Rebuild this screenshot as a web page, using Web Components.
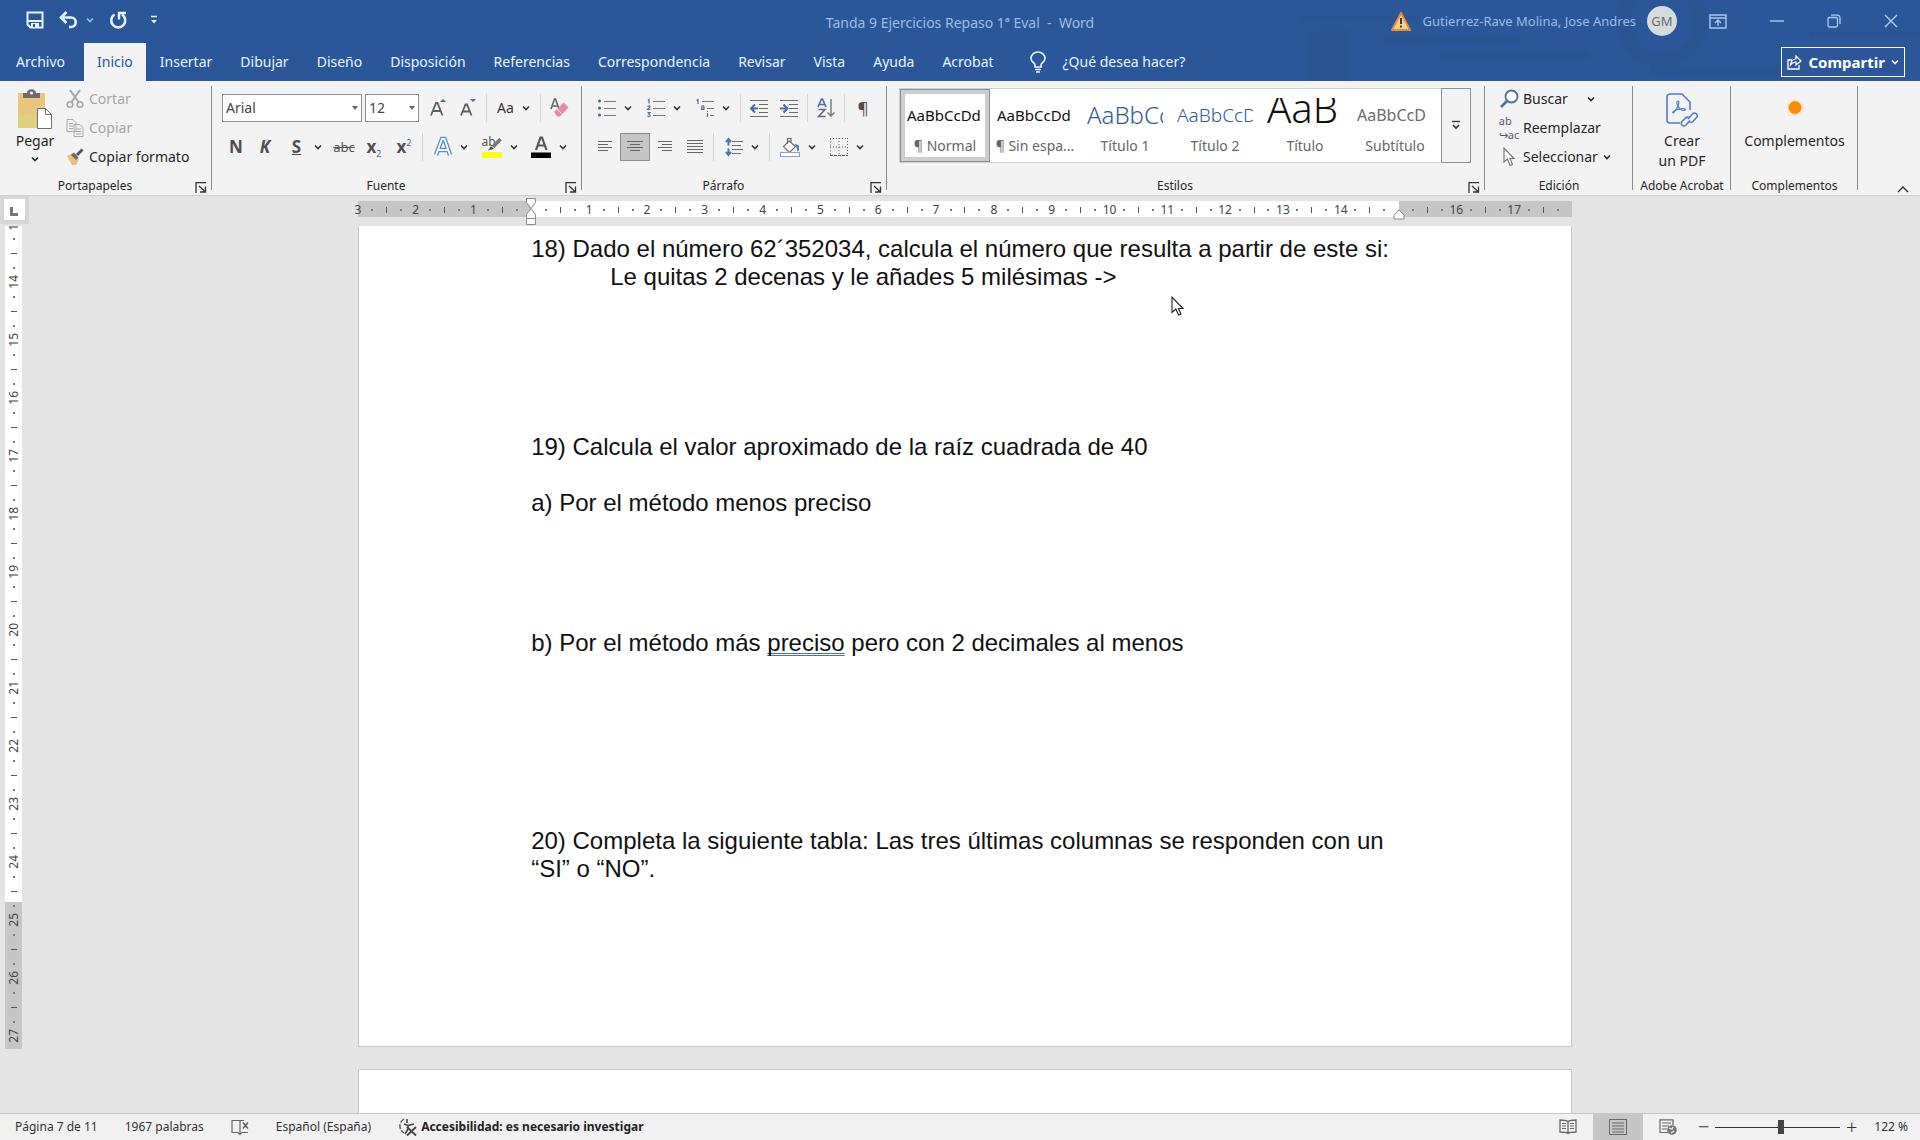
<!DOCTYPE html>
<html lang="es">
<head>
<meta charset="utf-8">
<title>Tanda 9 Ejercicios Repaso 1ª Eval - Word</title>
<style>
  html, body { margin: 0; height: 100%; overflow: hidden; }
  body { font: 14px/20px "Noto Sans", "Open Sans", sans-serif; color: #262626; background: #e4e4e4; }
</style>
</head>
<body>
<word-app></word-app>

<script>
const ICONS = {
  save: [18, 18, '<path d="M1.5 1.5h15v15h-12l-3-3z" fill="none" stroke="#e6f6ff" stroke-width="2"/><path d="M1 10h16" stroke="#e6f6ff" stroke-width="2"/><path d="M5 17v-5h8v5" fill="#e6f6ff"/><path d="M7 13h2v3H7z" fill="#2b579a"/>'],
  undo: [20, 18, '<path d="M2 6.500h10a4.500 4.500 0 0 1 0 9.500h-2" fill="none" stroke="#e6f6ff" stroke-width="2.600"/><path d="M7.500 1 2 6.500 7.500 12" fill="none" stroke="#e6f6ff" stroke-width="2.600"/>'],
  redo: [18, 18, '<path d="M5.500 3.500a7 7 0 1 0 7.500 0" fill="none" stroke="#e6f6ff" stroke-width="2.600"/><path d="M10 8.500V2h7" fill="none" stroke="#e6f6ff" stroke-width="2.400"/>'],
  customize: [8, 10, '<path d="M1 1.500h6" stroke="#e6f6ff" stroke-width="1.500"/><path d="M1 5h6L4 8.500z" fill="#e6f6ff"/>'],
  chev: [8, 8, '<path d="M1 2.500 4 5.500 7 2.500" fill="none" stroke="currentColor" stroke-width="1.600"/>'],
  bulb: [18, 22, '<path d="M6 16v-2C6 12 2 11 2 7.500a7 6.500 0 0 1 14 0C16 11 12 12 12 14v2z" fill="none" stroke="#e6f6ff" stroke-width="1.600"/><path d="M6 18.500h6M7 21h4" stroke="#e6f6ff" stroke-width="1.600"/>'],
  warning: [20, 19, '<path d="M10 1 19 18H1z" fill="#fbd58e" stroke="#e98a3c" stroke-width="2" stroke-linejoin="round"/><path d="M10 6v6M10 13.500v2" stroke="#4a3a28" stroke-width="2"/>'],
  display: [18, 15, '<path d="M1 1h16v13H1zM1 4h16M9 12V6M6 9l3-3 3 3" fill="none" stroke="#a9c8f0" stroke-width="1.400"/>'],
  min: [14, 14, '<path d="M0 7h14" stroke="#a9c8f0" stroke-width="1.400"/>'],
  restore: [14, 14, '<rect x="1" y="3.500" width="9.500" height="9.500" rx="1.500" fill="none" stroke="#a9c8f0" stroke-width="1.300"/><path d="M4 1.200h6.500a2.500 2.500 0 0 1 2.500 2.500V10" fill="none" stroke="#a9c8f0" stroke-width="1.300"/>'],
  close: [14, 14, '<path d="M1 1l12 12M13 1 1 13" stroke="#b9d4f5" stroke-width="1.300"/>'],
  share: [15, 16, '<path d="M5 6H1v9h11v-4" fill="none" stroke="#fff" stroke-width="1.300"/><path d="M3.500 11C4 7 6.500 5 9 5V2l5 5-5 4V8C7 8 5 9 3.500 11z" fill="none" stroke="#fff" stroke-width="1.200"/>'],
  paste: [34, 40, '<rect x="0" y="4" width="27" height="35" fill="#eac57d"/><path d="M0 26h20v13H0z" fill="#e0cf80"/><path d="M5 4h4c0-5 9-5 9 0h4v5H5z" fill="#6f6a70"/><circle cx="13.500" cy="4" r="1.600" fill="#f3f3f3"/><path d="M20 20.500h8l6 6V40.500H20z" fill="#fff" stroke="#6f6f6f" transform="translate(-.500 -1)"/><path d="M27.500 19.500v6h6" fill="none" stroke="#6f6f6f"/>'],
  cut: [18, 20, '<path d="M4 1l8.500 12M14 1 5.500 13" stroke="#a6a6a6" stroke-width="2"/><circle cx="4" cy="15.500" r="2.800" fill="none" stroke="#a6a6a6" stroke-width="1.600"/><circle cx="14" cy="15.500" r="2.800" fill="none" stroke="#a6a6a6" stroke-width="1.600"/>'],
  copy: [18, 20, '<path d="M1 1.500h6l3 3v9H1zM8 6.500h6l3 3v9H8z" fill="#f3f3f3" stroke="#a9a9a9"/><path d="M3 5.500h4M3 8h4M3 10.500h4M10 11h5M10 13.500h5M10 16h5" stroke="#a9a9a9"/>'],
  brush: [18, 18, '<path d="M1 8l6-3 6 6-3 6H6z" fill="#e7c278"/><path d="M8 4.500 12.500 9.500 10 12 5 7z" fill="#6f6a6a"/><path d="M11 7l5.500-5.500" stroke="#555" stroke-width="3"/>'],
  grow: [18, 20, '<path d="M2 17.500 7 5h1.500l5 12.500M4 13h7.500" fill="none" stroke="#5f5f5f" stroke-width="1.800"/><path d="M11 4l3-3 3 3z" fill="#2e6f9e"/>'],
  shrink: [18, 20, '<path d="M2 17.500 6.500 6.500H8l4.500 11M4 13.500h6.500" fill="none" stroke="#5f5f5f" stroke-width="1.800"/><path d="M11 1h6l-3 3z" fill="#3b6fc0"/>'],
  eraser: [20, 20, '<path d="M2 11 5.500 1h1L10 11M3.500 8h5" fill="none" stroke="#666" stroke-width="1.600"/><path d="M5 14 14.500 4.500 19.500 9.500 11 18.500 8 18.500z" fill="#e78aa5"/><path d="M8 11l5 5" stroke="#f6dbe3"/>'],
  effects: [18, 20, '<path d="M2 18 8 2h2.500L16 18M4.500 13h9" fill="none" stroke="#5a8fd0" stroke-width="4.500"/><path d="M2 18 8 2h2.500L16 18M4.500 13h9" fill="none" stroke="#fff" stroke-width="1.800"/>'],
  marker: [20, 22, '<path d="M18.500 3 11 11" stroke="#777" stroke-width="3.500"/><path d="M6 14.500 9 10l3 3z" fill="#555"/><path d="M0 16h20v6H0z" fill="#fdfd12"/>'],
  fontcolor: [20, 22, '<path d="M5 14 9.500 1.500h1.500L15.500 14M6.500 9.500H14" fill="none" stroke="#555" stroke-width="2.200"/><path d="M0 16.500h20V22H0z" fill="#000"/>'],
  bullets: [18, 18, '<g fill="#4a5f96"><circle cx="1.500" cy="2" r="1.500"/><circle cx="1.500" cy="9" r="1.500"/><circle cx="1.500" cy="16" r="1.500"/></g><path d="M6 2.500h12M6 9.500h12M6 16.500h12" stroke="#777"/>'],
  numbers: [18, 18, '<path d="M1 1.500 2 .500V4.500M.500 7.500Q3 6 3 8L.500 10.500H3.500M.500 13.500H3L1.500 15Q3.500 15.500 3 17 2 18 .500 17" fill="none" stroke="#5c6d9c" stroke-width="1.200"/><path d="M6 2.500h12M6 9.500h12M6 16.500h12" stroke="#777"/>'],
  multilevel: [18, 18, '<path d="M.500 1.500 2 .500V5M5 7.500Q8 6 8 8V10.500H5.500V9H8M11.500 14V18M11.500 12v1" fill="none" stroke="#5c6d9c" stroke-width="1.200"/><path d="M6 2.500h12M11 9.500h7M14 16.500h4" stroke="#777"/>'],
  outdent: [18, 18, '<path d="M0 1.500h18M9 5.500h9M9 9.500h9M9 13.500h9M0 17.500h18" stroke="#6d6d6d"/><path d="M8 9.500H2M5 5.500 1 9.500 5 13.500" fill="none" stroke="#4a6ba5" stroke-width="2"/>'],
  indent: [18, 18, '<path d="M0 1.500h18M9 5.500h9M9 9.500h9M9 13.500h9M0 17.500h18" stroke="#6d6d6d"/><path d="M0 9.500h6M3.500 5.500 7.500 9.500 3.500 13.500" fill="none" stroke="#4a6ba5" stroke-width="2"/>'],
  sort: [18, 20, '<path d="M1 9 4.500 1h1L9 9M2.500 6.500h5" fill="none" stroke="#4f6fb5" stroke-width="1.700"/><path d="M1.500 11.500h6.500L1.500 18.500H8.500" fill="none" stroke="#6d5f80" stroke-width="1.500"/><path d="M14 1v17M10.500 14.500 14 18l3.500-3.500" fill="none" stroke="#777" stroke-width="1.400"/>'],
  left: [16, 16, '<path d="M1 2.500h14M1 5.500h10M1 8.500h14M1 11.500h10" stroke="#666"/>'],
  center: [16, 16, '<path d="M0 2.500h16M3 5.500h10M0 8.500h16M3 11.500h10" stroke="#666"/>'],
  right: [16, 16, '<path d="M1 2.500h14M5 5.500h10M1 8.500h14M5 11.500h10" stroke="#666"/>'],
  justify: [16, 16, '<path d="M0 1.500h16M0 4.500h16M0 7.500h16M0 10.500h16M0 13.500h16" stroke="#666"/>'],
  spacing: [18, 18, '<path d="M7 3.500h11M7 7.500h9M7 11.500h11M7 15.500h9" stroke="#6d6d6d"/><path d="M3.500 1.500v6M3.500 10.500v6M1 4 3.500 1 6 4M1 14 3.500 17 6 14" fill="none" stroke="#4a78b5" stroke-width="2"/>'],
  bucket: [20, 20, '<path d="M9 4 15.500 9.500 9.500 15.500 3.500 9.500z" fill="#fff" stroke="#6d6d6d" stroke-width="1.200"/><path d="M7.500 7V1.500h3.500V5" fill="none" stroke="#6d6d6d" stroke-width="1.200"/><path d="M14 6.500l5 2V13l-1.500 1.500L16.500 10z" fill="#4a7fb5"/><rect x=".500" y="15.500" width="19" height="4" fill="#fff" stroke="#8aa0c0"/>'],
  borders: [18, 18, '<path d="M.500 .500v17M9 0v17.500M17.500 0v17.500M0 .500h18M0 9h18" fill="none" stroke="#666" stroke-dasharray="1 2"/><path d="M0 17.500h18" stroke="#666" stroke-dasharray="3 1"/>'],
  more: [12, 10, '<path d="M2 1.500h8" stroke="#333" stroke-width="1.400"/><path d="M3 5l3 3 3-3" fill="none" stroke="#333" stroke-width="1.600"/>'],
  launcher: [12, 11, '<path d="M1 11V.700h10" fill="none" stroke="#333" stroke-width="1.300"/><path d="M4 4l6 5.500M10.500 4.500V10H5" fill="none" stroke="#333" stroke-width="1.300"/>'],
  find: [19, 19, '<circle cx="11.500" cy="7.500" r="6" fill="#fff" stroke="#4a7199" stroke-width="1.800"/><path d="M7 12 1 18" stroke="#4a7199" stroke-width="2.600"/>'],
  arrow: [12, 20, '<path d="M1 1v14l3.500-3 2.500 6.500 2.500-1L7 11.500h4z" fill="#fff" stroke="#6f6f6f" stroke-width="1.100"/>'],
  pdf: [32, 36, '<path d="M14 30H4a3 3 0 0 1-3-3V4a3 3 0 0 1 3-3h12l8 8v8" fill="none" stroke="#4f7bd0" stroke-width="1.600"/><path d="M12 8c-1.500 0-1.500 2 0 5 1.500 3 4 4.500 6 4.500s2-1.500 0-1.800c-3-.400-7 .700-10 2.300-2 1.200-1.500 2.500-.300 1.500C10 17.500 13 12 13 9c0-.700-.500-1-1-1z" fill="none" stroke="#4f7bd0" stroke-width="1.200"/><path d="M22 26l4.500-5c2.500-2.500 6.500 1 4 3.500L27 28.500c-1 1-2.500 1-3.500 0M24 27.500l-4 4.500c-2.500 2.500-6.500-1-4-3.500L19.500 25c1-1 2.500-1 3.500 0" fill="none" stroke="#4f7bd0" stroke-width="1.600"/>'],
  addins: [30, 36, '<circle cx="15" cy="14.500" r="9" fill="#ffd9a0" opacity=".350"/><circle cx="15" cy="14.500" r="6.500" fill="#ff8c00"/>'],
  collapse: [12, 8, '<path d="M1 7l5-5 5 5" fill="none" stroke="#333" stroke-width="1.400"/>'],
  proof: [18, 16, '<path d="M9 14.500V1.500H1v12h6l2 2 2-2h6M9 1.500h4" fill="none" stroke="#666" stroke-width="1.200"/><path d="M12 3.500l5 6M17 3.500l-5 6" stroke="#555" stroke-width="1.400"/>'],
  access: [20, 18, '<path d="M6 1a8 8 0 0 0 0 14" fill="none" stroke="#555" stroke-width="1.400" stroke-dasharray="5 1.500"/><path d="M9 1v4M6 6l4 1.500 6-1.500M10 7.500v3.500l-3 5" fill="none" stroke="#444" stroke-width="1.600"/><path d="M9 9l9 8.500M18 9 9 17.500" stroke="#444" stroke-width="1.800"/>'],
  read: [18, 16, '<path d="M9 2.500C7 1 4 1 1 1v12c3 0 6 0 8 1.500 2-1.500 5-1.500 8-1.500V1c-3 0-6 0-8 1.500zV14" fill="none" stroke="#666" stroke-width="1.300"/><path d="M3 4.500h4M3 7h4M3 9.500h4M11 4.500h4M11 7h4M11 9.500h4" stroke="#666" stroke-width="1.200"/>'],
  print: [18, 16, '<rect x=".500" y=".500" width="17" height="15" fill="none" stroke="#666"/><path d="M3 4h12M3 7h12M3 10h12M3 13h12" stroke="#666"/>'],
  web: [18, 16, '<path d="M9 13.500H1V.800h13V6M3 4h9M3 7h7M3 10h5" fill="none" stroke="#666" stroke-width="1.200"/><circle cx="13" cy="11" r="4.800" fill="#777"/><path d="M10 9l3 1 1-2M12 14l3-2" stroke="#f3f3f3" stroke-width="1.200" fill="none"/>'],
  cursor: [13, 20, '<path d="M1 1v15.500l3.800-3.500 2.800 6 2.400-1-2.600-5.500H12z" fill="#fff" stroke="#222" stroke-width="1.100"/>'],
};

// Shadow root from a markup string, shared by every element below.
class Part extends HTMLElement {
  constructor() {
    super();
    this.attachShadow({ mode: 'open' });
  }
  connectedCallback() {
    this.shadowRoot.innerHTML = this.render();
  }
  attr(name, fallback = '') {
    return this.getAttribute(name) ?? fallback;
  }
}

customElements.define('app-icon', class extends Part {
  render() {
    const [w, h, body] = ICONS[this.attr('name')];
    return `<style>:host { display: inline-flex; flex: none; } svg { display: block; overflow: visible; }</style>
      <svg width="${w}" height="${h}" viewBox="0 0 ${w} ${h}" aria-hidden="true">${body}</svg>`;
  }
});

customElements.define('tool-button', class extends Part {
  render() {
    return `<style>
      :host { display: block; flex: none; width: var(--w, 30px); height: 28px; }
      :host([drop]) { width: var(--w, 49px); }
      button {
        display: flex; align-items: center; justify-content: center; gap: 8px;
        width: 100%; height: 100%; padding: 0; box-sizing: border-box;
        border: 0; background: none; color: #333; font: inherit;
      }
      :host([pressed]) button { background: #c6c6c6; border: 1px solid #8f8f8f; }
    </style>
    <button aria-label="${this.attr('label')}">
      <slot></slot>
      ${this.hasAttribute('icon') ? `<app-icon name="${this.attr('icon')}"></app-icon>` : ''}
      ${this.hasAttribute('drop') ? '<app-icon name="chev"></app-icon>' : ''}
    </button>`;
  }
});

customElements.define('line-button', class extends Part {
  render() {
    return `<style>
      :host { display: block; }
      button {
        display: grid; grid-template-columns: 18px auto auto; align-items: center; justify-items: center;
        column-gap: 5px; height: 29px; padding: 0; border: 0; background: none; color: inherit;
        font: inherit; white-space: nowrap;
      }
      button:disabled { color: #a6a6a6; }
      :host([split]) .chev { margin-left: 14px; }
    </style>
    <button ${this.hasAttribute('disabled') ? 'disabled' : ''}>
      ${this.hasAttribute('icon') ? `<app-icon name="${this.attr('icon')}"></app-icon>` : '<slot name="icon"></slot>'}
      <span><slot></slot></span>
      ${this.hasAttribute('drop') ? '<app-icon class="chev" name="chev"></app-icon>' : ''}
    </button>`;
  }
});

customElements.define('big-button', class extends Part {
  render() {
    return `<style>
      :host { display: block; }
      button {
        display: flex; flex-direction: column; align-items: center; width: 100%;
        padding: 10px 0 0; border: 0; background: none; color: inherit; font: inherit;
      }
      .pic { display: flex; align-items: end; height: 38px; margin-bottom: 2px; }
      .chev { margin-top: 4px; }
    </style>
    <button>
      <span class="pic"><app-icon name="${this.attr('icon')}"></app-icon></span>
      <slot></slot>
      ${this.hasAttribute('drop') ? '<app-icon class="chev" name="chev"></app-icon>' : ''}
    </button>`;
  }
});

customElements.define('tool-separator', class extends Part {
  render() {
    return `<style>:host { display: block; flex: none; width: 1px; height: 28px; margin: 0 3px; background: #d6d6d6; }</style>`;
  }
});

customElements.define('combo-select', class extends Part {
  render() {
    return `<style>
      :host { display: block; position: relative; flex: none; }
      select {
        width: 100%; height: 28px; box-sizing: border-box; padding: 0 3px; appearance: none;
        border: 1px solid #8f8f8f; border-radius: 0; background: #fff; color: #444; font: inherit;
      }
      i { position: absolute; right: 4px; top: 12px; border: 3px solid transparent; border-top: 4px solid #666; border-bottom: 0; pointer-events: none; }
    </style>
    <select aria-label="${this.attr('label')}"><option>${this.attr('value')}</option></select><i></i>`;
  }
});

customElements.define('ribbon-group', class extends Part {
  render() {
    return `<style>
      :host { display: flex; flex-direction: column; box-sizing: border-box; position: relative; }
      :host::after { content: ""; position: absolute; right: 0; top: 5px; bottom: 5px; width: 1px; background: #8c8c8c; }
      .body { flex: 1; }
      footer { display: flex; height: 18px; font-size: 12px; line-height: 18px; white-space: nowrap; }
      footer span { flex: 1; text-align: center; }
      button { flex: none; width: 22px; padding: 2px 0 0 5px; border: 0; background: none; line-height: 0; text-align: left; }
    </style>
    <div class="body"><slot></slot></div>
    <footer><span>${this.attr('label')}</span>
      ${this.hasAttribute('launcher') ? `<button aria-label="Opciones de ${this.attr('label')}"><app-icon name="launcher"></app-icon></button>` : ''}
    </footer>`;
  }
});

customElements.define('style-card', class extends Part {
  render() {
    return `<style>
      :host { display: block; flex: none; width: 90px; height: 73px; }
      button {
        display: flex; flex-direction: column; align-items: center; width: 100%; height: 100%;
        padding: 9px 0 0; box-sizing: border-box; border: 0; background: none; font: inherit; color: #666; white-space: nowrap;
      }
      :host([selected]) button { padding-top: 8px; border: 1px solid #8f8f8f; box-shadow: inset 0 0 0 4px #cdcdcd; }
      .sample {
        width: 76px; height: 34px; overflow: hidden; text-align: left; line-height: 34px;
        font-size: var(--size, 15px); font-weight: var(--weight, 400); color: var(--ink, #111);
      }
      :host([tall]) .sample { line-height: 20px; }
      .name { margin-top: 4px; }
    </style>
    <button><span class="sample">${this.attr('sample')}</span><span class="name"><slot></slot></span></button>`;
  }
});

customElements.define('app-header', class extends Part {
  render() {
    const tabs = ['Archivo', 'Inicio', 'Insertar', 'Dibujar', 'Diseño', 'Disposición', 'Referencias',
      'Correspondencia', 'Revisar', 'Vista', 'Ayuda', 'Acrobat'];
    return `<style>
      :host {
        --shade: #2a5492;
        display: block; color: #e9f5ff;
        background:
          radial-gradient(circle at right 258px top 21px, #2b579a 28px, var(--shade) 36px, var(--shade) 42px, transparent 50px),
          linear-gradient(90deg, transparent, var(--shade) 20% 80%, transparent) right 565px top 30px / 50px 51px no-repeat,
          linear-gradient(transparent, var(--shade) 50%, transparent) right 500px top 12px / 120px 12px no-repeat,
          linear-gradient(transparent, var(--shade) 50%, transparent) right 400px top 34px / 135px 13px no-repeat,
          linear-gradient(transparent, var(--shade) 50%, transparent) right 330px top 48px / 150px 14px no-repeat,
          linear-gradient(transparent, var(--shade) 50%, transparent) right 0 top 28px / 110px 12px no-repeat,
          linear-gradient(transparent, var(--shade) 50%, transparent) right 140px top 64px / 130px 14px no-repeat,
          #2b579a;
      }
      button { padding: 0; border: 0; background: none; color: inherit; font: inherit; display: flex; align-items: center; }
      .title { display: grid; grid-template-columns: 1fr auto 1fr; height: 43px; color: #9dbce8; }
      .quick { display: flex; align-items: center; height: 40px; padding-left: 26px; gap: 15px; }
      .quick .undo { gap: 7px; }
      .quick .last { margin-left: 8px; }
      h1 { margin: 0; font: inherit; line-height: 46px; white-space: pre; }
      .account { display: flex; align-items: center; justify-content: flex-end; height: 42px; padding-right: 22px; font-size: 13px; }
      .user { margin: 0 11px 0 12px; gap: 11px; white-space: nowrap; }
      .avatar { width: 30px; height: 30px; border-radius: 50%; background: #d6dcdb; color: #6b6b6b; line-height: 30px; text-align: center; }
      .window { display: flex; gap: 43px; margin-left: 21px; height: 38px; }
      nav { display: flex; height: 38px; padding-left: 2px; }
      nav a { padding: 0 14px; line-height: 38px; color: inherit; text-decoration: none; }
      nav a.on { background: #f3f3f3; color: #2b579a; padding: 0 13px; margin-left: 5px; }
      .tell { gap: 16px; margin-left: 21px; }
      .share {
        margin: 4px 15px 0 auto; height: 30px; padding: 0 5px; gap: 6px; box-sizing: border-box;
        border: 1px solid #fff; color: #fff; font-size: 15px; font-weight: 700;
      }
    </style>
    <div class="title">
      <div class="quick">
        <button aria-label="Guardar"><app-icon name="save"></app-icon></button>
        <button class="undo" aria-label="Deshacer"><app-icon name="undo"></app-icon><app-icon name="chev"></app-icon></button>
        <button aria-label="Rehacer"><app-icon name="redo"></app-icon></button>
        <button class="last" aria-label="Personalizar"><app-icon name="customize"></app-icon></button>
      </div>
      <h1>Tanda 9 Ejercicios Repaso 1ª Eval  -  Word</h1>
      <div class="account">
        <app-icon name="warning"></app-icon>
        <button class="user">Gutierrez-Rave Molina, Jose Andres <span class="avatar">GM</span></button>
        <div class="window">
          <button aria-label="Opciones de cinta"><app-icon name="display"></app-icon></button>
          <button aria-label="Minimizar"><app-icon name="min"></app-icon></button>
          <button aria-label="Restaurar"><app-icon name="restore"></app-icon></button>
          <button aria-label="Cerrar"><app-icon name="close"></app-icon></button>
        </div>
      </div>
    </div>
    <nav>
      ${tabs.map((t) => `<a href="#"${t === 'Inicio' ? ' class="on"' : ''}>${t}</a>`).join('')}
      <button class="tell"><app-icon name="bulb"></app-icon>¿Qué desea hacer?</button>
      <button class="share"><app-icon name="share"></app-icon>Compartir<app-icon name="chev"></app-icon></button>
    </nav>`;
  }
});

customElements.define('app-ribbon', class extends Part {
  render() {
    return `<style>
      :host { display: flex; height: 114px; background: #f3f3f3; border-bottom: 1px solid #cfcfcf; }
      ribbon-group { flex: none; }
      .clip { width: 212px; } .font { width: 370px; } .para { width: 305px; }
      .styles { flex: 1; min-width: 0; } .edit { width: 148px; } .pdf { width: 98px; } .add { width: 127px; }
      .cols { display: flex; }
      .cols big-button { width: 58px; margin: 0 2px 0 6px; }
      .lines { padding-top: 3px; }
      .edit .lines { padding-left: 15px; }
      .rows { display: grid; gap: 11px; padding: 13px 0 0 8px; }
      .font .rows { padding-left: 10px; }
      .row { display: flex; align-items: center; }
      .name { width: 140px; margin-right: 3px; } .size { width: 54px; margin-right: 4px; }
      .narrow { --w: 28px; } .case { --w: 47px; }
      b, .glyph { font-size: 17px; color: #505050; }
      .mid { width: 18px; text-align: center; }
      s { font-size: 13px; color: #505050; }
      sub, sup { font-size: 9px; font-weight: 400; line-height: 0; color: #4a6ba5; }
      .hl { font-size: 12px; color: #555; width: 20px; height: 22px; position: relative; line-height: 12px; text-align: left; }
      .hl app-icon { position: absolute; inset: 0; }
      .gallery { display: flex; margin: 7px 14px 0 12px; height: 75px; box-sizing: border-box; border: 1px solid #cfcfcf; background: #fff; }
      .gallery .more { margin: -1px -1px -1px auto; width: 30px; padding: 0; border: 1px solid #8f8f8f; background: #f3f3f3; }
      .ab { font-size: 11px; line-height: 14px; color: #5f5570; text-align: left; }
      .ab span { display: block; }
      .rest { width: 62px; display: flex; align-items: end; justify-content: end; box-sizing: border-box; padding-right: 11px; }
      .rest button { border: 0; background: none; padding: 0; height: 13px; line-height: 0; }
    </style>
    <ribbon-group class="clip" label="Portapapeles" launcher>
      <div class="cols">
        <big-button icon="paste" drop>Pegar</big-button>
        <div class="lines">
          <line-button icon="cut" disabled>Cortar</line-button>
          <line-button icon="copy" disabled>Copiar</line-button>
          <line-button icon="brush">Copiar formato</line-button>
        </div>
      </div>
    </ribbon-group>
    <ribbon-group class="font" label="Fuente" launcher>
      <div class="rows">
        <div class="row">
          <combo-select class="name" label="Fuente" value="Arial"></combo-select>
          <combo-select class="size" label="Tamaño" value="12"></combo-select>
          <tool-button icon="grow" label="Aumentar tamaño"></tool-button>
          <tool-button icon="shrink" label="Disminuir tamaño"></tool-button>
          <tool-separator></tool-separator>
          <tool-button class="case" drop label="Cambiar mayúsculas">Aa</tool-button>
          <tool-separator></tool-separator>
          <tool-button icon="eraser" label="Borrar formato"></tool-button>
        </div>
        <div class="row">
          <tool-button class="narrow" label="Negrita"><b>N</b></tool-button>
          <tool-button label="Cursiva"><b><i>K</i></b></tool-button>
          <tool-button drop label="Subrayado"><b class="mid"><u>S</u></b></tool-button>
          <tool-button label="Tachado"><s>abc</s></tool-button>
          <tool-button label="Subíndice"><b>x<sub>2</sub></b></tool-button>
          <tool-button label="Superíndice"><b>x<sup>2</sup></b></tool-button>
          <tool-separator></tool-separator>
          <tool-button icon="effects" drop label="Efectos de texto"></tool-button>
          <tool-button drop label="Resaltado"><span class="hl">ab<app-icon name="marker"></app-icon></span></tool-button>
          <tool-button icon="fontcolor" drop label="Color de fuente"></tool-button>
        </div>
      </div>
    </ribbon-group>
    <ribbon-group class="para" label="Párrafo" launcher>
      <div class="rows">
        <div class="row">
          <tool-button icon="bullets" drop label="Viñetas"></tool-button>
          <tool-button icon="numbers" drop label="Numeración"></tool-button>
          <tool-button icon="multilevel" drop label="Lista multinivel"></tool-button>
          <tool-separator></tool-separator>
          <tool-button icon="outdent" label="Disminuir sangría"></tool-button>
          <tool-button icon="indent" label="Aumentar sangría"></tool-button>
          <tool-separator></tool-separator>
          <tool-button icon="sort" label="Ordenar"></tool-button>
          <tool-separator></tool-separator>
          <tool-button label="Mostrar todo"><span class="glyph">¶</span></tool-button>
        </div>
        <div class="row">
          <tool-button icon="left" label="Alinear a la izquierda"></tool-button>
          <tool-button icon="center" pressed label="Centrar"></tool-button>
          <tool-button icon="right" label="Alinear a la derecha"></tool-button>
          <tool-button icon="justify" label="Justificar"></tool-button>
          <tool-separator></tool-separator>
          <tool-button icon="spacing" drop label="Interlineado"></tool-button>
          <tool-separator></tool-separator>
          <tool-button icon="bucket" drop label="Sombreado"></tool-button>
          <tool-button icon="borders" drop label="Bordes"></tool-button>
        </div>
      </div>
    </ribbon-group>
    <ribbon-group class="styles" label="Estilos" launcher>
      <div class="gallery">
        <style-card selected sample="AaBbCcDd">¶ Normal</style-card>
        <style-card sample="AaBbCcDd">¶ Sin espa...</style-card>
        <style-card sample="AaBbCc" style="--size: 24px; --weight: 300; --ink: #2f5c93">Título 1</style-card>
        <style-card sample="AaBbCcD" style="--size: 19px; --weight: 300; --ink: #2f5c93">Título 2</style-card>
        <style-card tall sample="AaB" style="--size: 40px; --weight: 300">Título</style-card>
        <style-card sample="AaBbCcD" style="--size: 16px; --ink: #6a6a6a">Subtítulo</style-card>
        <button class="more" aria-label="Más estilos"><app-icon name="more"></app-icon></button>
      </div>
    </ribbon-group>
    <ribbon-group class="edit" label="Edición">
      <div class="lines">
        <line-button icon="find" drop split>Buscar</line-button>
        <line-button><span slot="icon" class="ab"><span>ab</span><span>↪ac</span></span>Reemplazar</line-button>
        <line-button icon="arrow" drop>Seleccionar</line-button>
      </div>
    </ribbon-group>
    <ribbon-group class="pdf" label="Adobe Acrobat"><big-button icon="pdf">Crear<br>un PDF</big-button></ribbon-group>
    <ribbon-group class="add" label="Complementos"><big-button icon="addins">Complementos</big-button></ribbon-group>
    <div class="rest"><button aria-label="Contraer la cinta"><app-icon name="collapse"></app-icon></button></div>`;
  }
});

// Ruler above the page: 21 cm, one flex cell for each quarter of a centimetre.
customElements.define('page-ruler', class extends Part {
  render() {
    const cells = [];
    for (let q = 0; q < 84; q++) {
      const cm = q / 4 - 3;
      const hidden = cm === 0 || cm === 15;
      const mark = q % 4 === 0 ? Math.abs(cm) : q % 4 === 2 ? '<i></i>' : '<u></u>';
      cells.push(`<span>${hidden ? '' : mark}</span>`);
    }
    return `<style>
      :host {
        display: block; position: relative; height: 16px; margin-top: 5px;
        background: linear-gradient(90deg, #c6c6c6 14.286%, #fff 14.286% 85.714%, #c6c6c6 85.714%);
      }
      .cells { display: flex; height: 17px; margin-left: -7px; margin-right: 7px; }
      span { display: flex; flex: 1 0 0; width: 0; align-items: center; justify-content: center; font-size: 12px; line-height: 17px; color: #444; }
      i { flex: none; width: 1px; height: 6px; background: #555; }
      u { flex: none; width: 2px; height: 2px; background: #777; }
      svg { position: absolute; overflow: visible; top: -3px; width: 10px; height: 28px; margin-left: -5px; fill: #fff; stroke: #8a8a8a; }
      .start { left: 14.286%; }
      .end { left: 85.714%; }
    </style>
    <div class="cells">${cells.join('')}</div>
    <svg class="start" viewBox="0 0 10 28"><path d="M.500 .500h9v4L5 10.500.500 4.500zM5 10.500l4.500 6v4h-9v-4zM.500 20.500h9v6h-9z"/></svg>
    <svg class="end" viewBox="0 0 10 28"><path d="M5 12l5 5v4H0v-4z"/></svg>`;
  }
});

// Ruler beside the page; the first number runs under the top edge.
customElements.define('side-ruler', class extends Part {
  render() {
    const cells = [];
    for (let cm = 13; cm < 27; cm++) cells.push(`<div><b>${cm}</b><u></u><i></i><u></u></div>`);
    return `<style>
      :host {
        display: block; justify-self: end; align-self: start; width: 17px; overflow: hidden;
        background: linear-gradient(#fff 676px, #c6c6c6 676px);
      }
      section { margin: -9px 0 6px; }
      div {
        display: grid; grid-template-rows: 14px 15px 14px 15px;
        height: 58px; align-items: center; justify-items: center;
      }
      div.end { height: 14px; grid-template-rows: 14px; }
      b { font-size: 12px; font-weight: 400; line-height: 17px; color: #444; writing-mode: vertical-rl; transform: rotate(180deg); }
      i { width: 6px; height: 1px; background: #555; }
      u { width: 2px; height: 2px; background: #777; }
    </style>
    <section>${cells.join('')}<div class="end"><b>27</b></div></section>`;
  }
});

customElements.define('doc-area', class extends Part {
  render() {
    return `<style>
      :host {
        display: grid; grid-template-columns: 22px 1fr; grid-template-rows: 30px 1fr;
        flex: 1; min-height: 0; overflow: hidden; background: #e4e4e4;
      }
      .corner { position: relative; z-index: 1; width: 29px; height: 28px; box-sizing: border-box; border: 4px solid #d6d6d6; border-top-width: 3px; background: #fff; }
      .corner i { position: absolute; left: 6px; bottom: 4px; width: 5px; height: 6px; border: solid #777; border-width: 0 0 3px 3px; }
      .lane { padding-right: 12px; display: flex; justify-content: center; }
      .lane > * { width: 64.4%; }
      .pages { display: flex; flex-direction: column; gap: 22px; }
      article {
        position: relative; box-sizing: border-box; border: 1px solid #c9c9c9; border-top-color: #fff; background: #fff;
        padding: 8px 0 163px 14.2%; color: #111; font: 24px/28px "Liberation Sans", Arial, sans-serif; white-space: nowrap;
      }
      article.next { flex: 1; border-top-color: #c9c9c9; border-bottom: 0; padding: 0; }
      p { margin: 0 0 28px; }
      .tabbed { padding-left: 79px; }
      .work { margin-bottom: 112px; }
      .wide { margin-bottom: 142px; }
      .full { margin-bottom: 170px; }
      .end { margin: 0; }
      .check { text-decoration: underline double #4a6fb5 1px; text-underline-offset: 2px; text-decoration-skip-ink: none; }
      .cursor { position: absolute; left: 67%; top: 69px; }
    </style>
    <div class="corner"><i></i></div>
    <div class="lane"><page-ruler></page-ruler></div>
    <side-ruler></side-ruler>
    <div class="lane">
      <div class="pages">
        <article>
          <p class="wide">18) Dado el número 62´352034, calcula el número que resulta a partir de este si:<br><span class="tabbed">Le quitas 2 decenas y le añades 5 milésimas -&gt;</span></p>
          <p>19) Calcula el valor aproximado de la raíz cuadrada de 40</p>
          <p class="work">a) Por el método menos preciso</p>
          <p class="full">b) Por el método más <span class="check">preciso</span> pero con 2 decimales al menos</p>
          <p class="end">20) Completa la siguiente tabla: Las tres últimas columnas se responden con un<br>“SI” o “NO”.</p>
          <app-icon class="cursor" name="cursor"></app-icon>
        </article>
        <article class="next"></article>
      </div>
    </div>`;
  }
});

customElements.define('status-bar', class extends Part {
  render() {
    return `<style>
      :host {
        display: flex; align-items: center; height: 26px; padding: 0 12px 0 15px;
        border-top: 1px solid #c6c6c6; background: #f1f1f1; font-size: 12px; color: #333;
      }
      button { display: flex; align-items: center; gap: 3px; height: 26px; padding: 0; border: 0; background: none; color: inherit; font: inherit; }
      .info { display: flex; gap: 27px; }
      .info strong { font-weight: 700; color: #222; }
      .views { display: flex; margin-left: auto; }
      .views button { width: 50px; justify-content: center; }
      .views .on { background: #c6c6c6; }
      .zoom { display: flex; align-items: center; gap: 6px; margin-left: 5px; }
      .zoom .step { font-size: 20px; font-weight: 300; width: 11px; justify-content: center; }
      input { width: 125px; height: 16px; margin: 0; appearance: none; background: linear-gradient(#333, #333) center / 100% 1px no-repeat; }
      input::-webkit-slider-thumb { appearance: none; width: 6px; height: 14px; background: #444; }
      .pct { margin-left: 11px; }
    </style>
    <div class="info">
      <button>Página 7 de 11</button>
      <button>1967 palabras</button>
      <button aria-label="Revisión"><app-icon name="proof"></app-icon></button>
      <button>Español (España)</button>
      <button><app-icon name="access"></app-icon><strong>Accesibilidad: es necesario investigar</strong></button>
    </div>
    <div class="views">
      <button aria-label="Modo de lectura"><app-icon name="read"></app-icon></button>
      <button class="on" aria-label="Diseño de impresión"><app-icon name="print"></app-icon></button>
      <button aria-label="Diseño web"><app-icon name="web"></app-icon></button>
    </div>
    <div class="zoom">
      <button class="step" aria-label="Alejar">−</button>
      <input type="range" min="0" max="100" value="53" aria-label="Zoom">
      <button class="step" aria-label="Acercar">+</button>
      <button class="pct">122 %</button>
    </div>`;
  }
});

customElements.define('word-app', class extends Part {
  render() {
    return `<style>:host { display: flex; flex-direction: column; height: 100vh; }</style>
      <app-header></app-header>
      <app-ribbon></app-ribbon>
      <doc-area></doc-area>
      <status-bar></status-bar>`;
  }
});
</script>
</body>
</html>
